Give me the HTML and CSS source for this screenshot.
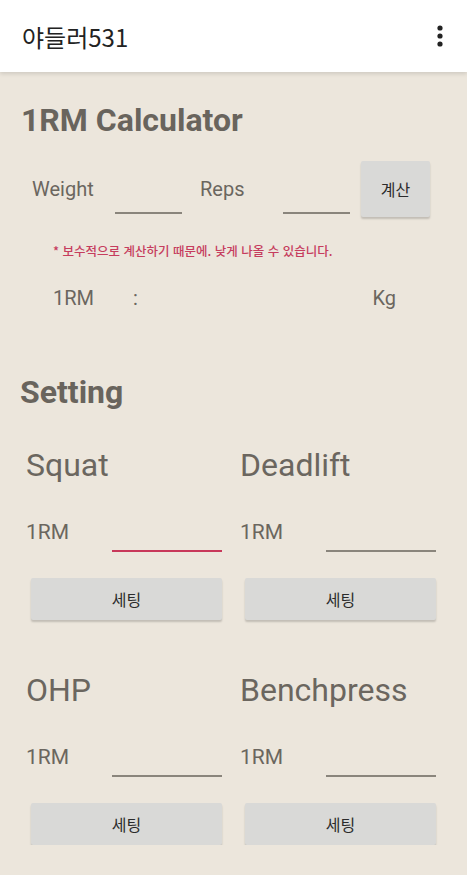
FILE: index.html
```html
<!DOCTYPE html>
<html lang="ko">

<head>
    <meta charset="UTF-8">
    <meta name="viewport" content="width=device-width, initial-scale=1.0">
    <title>야들러531</title>
    <link rel="stylesheet" href="styles.css">
</head>

<body>
    <header class="appbar">
        <span class="app-title">야들러531</span>
        <button class="menu-btn" aria-label="menu">
            <svg width="6" height="22" viewBox="0 0 6 22">
                <circle cx="3" cy="3" r="2.6" fill="#222" />
                <circle cx="3" cy="11" r="2.6" fill="#222" />
                <circle cx="3" cy="19" r="2.6" fill="#222" />
            </svg>
        </button>
    </header>

    <main class="content">
        <section class="calc">
            <h2 class="section-title">1RM Calculator</h2>
            <div class="calc-row">
                <span class="calc-label">Weight</span>
                <input type="number" class="line-input calc-input" id="weight-input">
                <span class="calc-label">Reps</span>
                <input type="number" class="line-input calc-input" id="reps-input">
                <button class="gray-btn calc-btn">계산</button>
            </div>
            <p class="note">* 보수적으로 계산하기 때문에. 낮게 나올 수 있습니다.</p>
            <div class="result-row">
                <span>1RM</span>
                <span>:</span>
                <span id="result-value"></span>
                <span>Kg</span>
            </div>
        </section>

        <section class="setting">
            <h2 class="section-title setting-title">Setting</h2>
            <div class="lift-grid">
                <div class="lift">
                    <div class="lift-name">Squat</div>
                    <div class="lift-row">
                        <span class="lift-label">1RM</span>
                        <input type="number" class="line-input focused">
                    </div>
                    <button class="gray-btn set-btn">세팅</button>
                </div>
                <div class="lift">
                    <div class="lift-name">Deadlift</div>
                    <div class="lift-row">
                        <span class="lift-label">1RM</span>
                        <input type="number" class="line-input">
                    </div>
                    <button class="gray-btn set-btn">세팅</button>
                </div>
                <div class="lift">
                    <div class="lift-name">OHP</div>
                    <div class="lift-row">
                        <span class="lift-label">1RM</span>
                        <input type="number" class="line-input">
                    </div>
                    <button class="gray-btn set-btn">세팅</button>
                </div>
                <div class="lift">
                    <div class="lift-name">Benchpress</div>
                    <div class="lift-row">
                        <span class="lift-label">1RM</span>
                        <input type="number" class="line-input">
                    </div>
                    <button class="gray-btn set-btn">세팅</button>
                </div>
            </div>
        </section>
    </main>
</body>

</html>
```

FILE: styles.css
```css
body {
    font-family: Roboto, "Noto Sans CJK KR", sans-serif;
    background-color: #ece6dc;
    color: #6b665f;
    margin: 0;
    padding: 0;
}

.appbar {
    height: 72px;
    background-color: #fff;
    display: flex;
    align-items: center;
    justify-content: space-between;
    padding: 0 24px 0 22px;
    box-shadow: 0 2px 4px rgba(0, 0, 0, 0.12);
}

.app-title {
    font-family: "Noto Sans CJK KR", Roboto, sans-serif;
    font-size: 24px;
    color: #222;
}

.menu-btn {
    background: none;
    border: none;
    padding: 0;
    display: flex;
}

.content {
    padding: 0 20px;
}

.section-title {
    margin: 29px 0 0 1px;
    font-size: 32px;
    line-height: 38px;
    font-weight: bold;
    color: #69645d;
}

.calc-row {
    display: flex;
    height: 56px;
    align-items: center;
    margin: 22px 0 0 12px;
}

.calc-label {
    width: 83px;
    font-size: 20px;
}

.line-input {
    background: transparent;
    border: none;
    border-bottom: 2px solid #8a857c;
    height: 38px;
    padding: 0;
    font-size: 20px;
    font-family: inherit;
    outline: none;
    box-sizing: border-box;
}

.line-input.focused {
    border-bottom-color: #c8385a;
}

.calc-input {
    width: 67px;
    margin-right: 18px;
    align-self: flex-end;
    margin-bottom: 3px;
}

.gray-btn {
    background-color: #d9d9d7;
    border: none;
    border-radius: 2px;
    color: #2b2b2b;
    font-family: "Noto Sans CJK KR", sans-serif;
    font-size: 16px;
    box-shadow: 0 2px 2px rgba(0, 0, 0, 0.18);
    cursor: pointer;
}

.calc-btn {
    width: 69px;
    height: 56px;
    margin-left: -7px;
}

.note {
    margin: 26px 0 0 33px;
    font-family: "Noto Sans CJK KR", sans-serif;
    font-size: 12.5px;
    line-height: 16px;
    font-weight: 500;
    color: #c63d5e;
}

.result-row {
    display: grid;
    grid-template-columns: 80px 1fr auto;
    margin-top: 25px;
    padding: 0 51px 0 33px;
    font-size: 20px;
    line-height: 28px;
}

.result-row #result-value {
    display: none;
}

.setting-title {
    margin-top: 61px;
    margin-left: 0;
}

.lift-grid {
    display: grid;
    grid-template-columns: 196px 196px;
    column-gap: 18px;
    row-gap: 51px;
    margin-top: 35px;
    padding-left: 6px;
}

.lift-name {
    font-size: 32px;
    line-height: 38px;
}

.lift-row {
    display: flex;
    align-items: center;
    height: 48px;
    margin-top: 24px;
}

.lift-label {
    width: 86px;
    font-size: 21px;
}

.lift-row .line-input {
    flex: 1;
    min-width: 0;
    height: 40px;
}

.set-btn {
    display: block;
    width: calc(100% - 5px);
    height: 42px;
    margin: 22px 0 0 5px;
}
```
